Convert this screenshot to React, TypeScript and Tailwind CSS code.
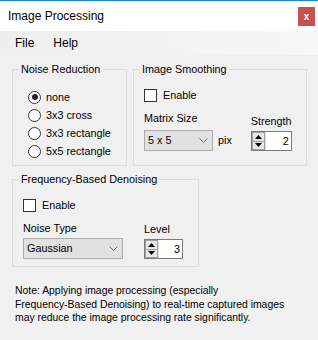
import React from "react";

const Radio = ({ checked, label }: { checked?: boolean; label: string }) => (
  <div className="flex h-[18px] items-center">
    <div className="flex h-[13px] w-[13px] items-center justify-center rounded-full border border-[#333333] bg-white">
      {checked && <div className="h-[6px] w-[6px] rounded-full bg-[#222222]" />}
    </div>
    <span className="ml-[5px]">{label}</span>
  </div>
);

const Check = ({ label }: { label: string }) => (
  <div className="flex h-[13px] items-center">
    <div className="h-[13px] w-[13px] border border-[#333333] bg-white" />
    <span className="ml-[6px]">{label}</span>
  </div>
);

const Combo = ({ value, width }: { value: string; width: string }) => (
  <div className={`flex h-[21px] items-center justify-between border border-[#adadad] bg-[#e1e1e1] pl-[3px] pr-[4px] ${width}`}>
    <span>{value}</span>
    <svg width="9" height="5" viewBox="0 0 9 5">
      <path d="M0.5 0.5 L4.5 4.5 L8.5 0.5" fill="none" stroke="#707070" strokeWidth="1" />
    </svg>
  </div>
);

const Spin = ({ value, width }: { value: string; width: string }) => (
  <div className={`flex h-[20px] border border-[#7a7a7a] bg-white ${width}`}>
    <div className="flex w-[14px] flex-col border-r border-[#e0e0e0]">
      <div className="flex flex-1 items-center justify-center border border-[#a0a0a0] bg-[#e8e8e8]">
        <svg width="7" height="4" viewBox="0 0 7 4"><path d="M3.5 0 L7 4 L0 4 Z" fill="#000" /></svg>
      </div>
      <div className="flex flex-1 items-center justify-center border border-t-0 border-[#a0a0a0] bg-[#e8e8e8]">
        <svg width="7" height="4" viewBox="0 0 7 4"><path d="M0 0 L7 0 L3.5 4 Z" fill="#000" /></svg>
      </div>
    </div>
    <div className="flex flex-1 items-center justify-end pr-[2px]">{value}</div>
  </div>
);

export default function App() {
  return (
    <div className="flex h-[340px] w-[318px] flex-col overflow-hidden bg-[#f0f0f0] font-['Liberation_Sans',Arial,sans-serif] text-[10.8px] leading-[13px] text-black">
      <div className="h-[1px] bg-[#1883d7]" />
      <div className="flex h-[30px] items-center justify-between bg-white pl-[8px] pr-[3px]">
        <span className="text-[12px]">Image Processing</span>
        <div className="flex h-[19px] w-[17px] items-center justify-center bg-[#c75050] text-[10px] font-bold text-white">x</div>
      </div>
      <div className="flex h-[24px] items-center gap-[19px] bg-gradient-to-r from-[#eeeeee] to-[#f7f7f7] pl-[15px] text-[12px]">
        <span>File</span>
        <span>Help</span>
      </div>
      <div className="flex flex-col pl-[12px]">
        <div className="mt-[8px] flex gap-[6px]">
          <fieldset className="h-[103px] w-[115px] border border-[#dcdcdc] p-0">
            <legend className="ml-[6px] px-[2px]">Noise Reduction</legend>
            <div className="flex flex-col pl-[15px] pt-[12px]">
              <Radio checked label="none" />
              <Radio label="3x3 cross" />
              <Radio label="3x3 rectangle" />
              <Radio label="5x5 rectangle" />
            </div>
          </fieldset>
          <fieldset className="h-[103px] w-[174px] border border-[#dcdcdc] p-0">
            <legend className="ml-[6px] px-[2px]">Image Smoothing</legend>
            <div className="flex flex-col pl-[10px] pt-[13px]">
              <Check label="Enable" />
              <div className="mt-[10px] flex items-end">
                <div className="flex flex-col">
                  <span>Matrix Size</span>
                  <div className="mt-[5px] flex items-center">
                    <Combo value="5 x 5" width="w-[69px]" />
                    <span className="ml-[5px]">pix</span>
                  </div>
                </div>
                <div className="ml-[19px] flex flex-col">
                  <span>Strength</span>
                  <div className="mt-[3px]">
                    <Spin value="2" width="w-[41px]" />
                  </div>
                </div>
              </div>
            </div>
          </fieldset>
        </div>
        <fieldset className="mt-[7px] h-[94px] w-[187px] border border-[#dcdcdc] p-0">
          <legend className="ml-[6px] px-[2px]">Frequency-Based Denoising</legend>
          <div className="flex flex-col pl-[10px] pt-[13px]">
            <Check label="Enable" />
            <div className="mt-[10px] flex items-end">
              <div className="flex flex-col">
                <span>Noise Type</span>
                <div className="mt-[3px]">
                  <Combo value="Gaussian" width="w-[100px]" />
                </div>
              </div>
              <div className="ml-[21px] flex flex-col">
                <span>Level</span>
                <div className="mt-[3px]">
                  <Spin value="3" width="w-[39px]" />
                </div>
              </div>
            </div>
          </div>
        </fieldset>
        <p className="mt-[17px] pl-[3px] text-[10.4px] leading-[13.5px]">
          Note: Applying image processing (especially
          <br />
          Frequency-Based Denoising) to real-time captured images
          <br />
          may reduce the image processing rate significantly.
        </p>
      </div>
    </div>
  );
}
